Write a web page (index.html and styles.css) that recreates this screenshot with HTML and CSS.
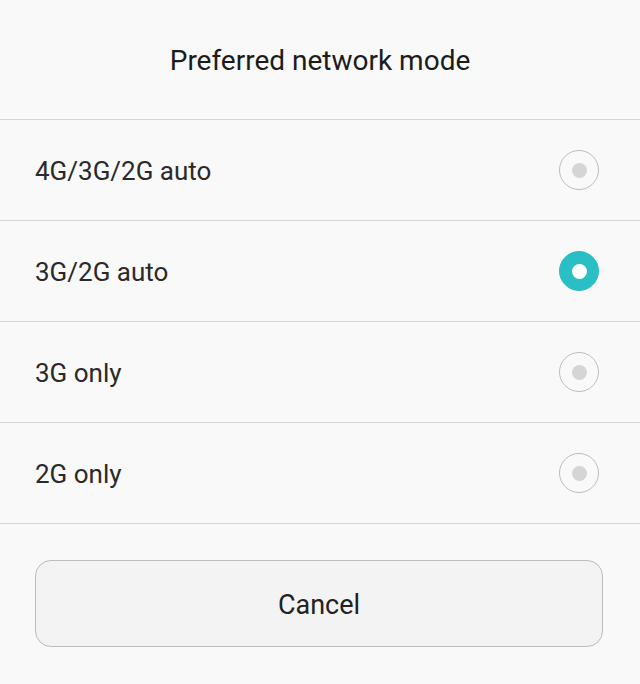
FILE: index.html
```html
<!DOCTYPE html>
<html lang="en">
<head>
    <meta charset="UTF-8" />
    <title>Preferred network mode</title>
    <link rel="stylesheet" href="styles.css">
</head>
<body>
    <div class="dialog">
        <h1 class="title">Preferred network mode</h1>

        <ul class="options">
            <li class="option">
                <span class="label">4G/3G/2G auto</span>
                <span class="radio"></span>
            </li>
            <li class="option">
                <span class="label">3G/2G auto</span>
                <span class="radio checked"></span>
            </li>
            <li class="option">
                <span class="label">3G only</span>
                <span class="radio"></span>
            </li>
            <li class="option">
                <span class="label">2G only</span>
                <span class="radio"></span>
            </li>
        </ul>

        <div class="actions">
            <button class="cancel">Cancel</button>
        </div>
    </div>
</body>
</html>
```

FILE: styles.css
```css
body {
    margin: 0;
    background: #f9f9f9;
    font-family: Roboto, 'Noto Sans', sans-serif;
    color: #212121;
}
.dialog {
    width: 640px;
    height: 684px;
}
.title {
    margin: 0;
    height: 119px;
    line-height: 122px;
    text-align: center;
    font-size: 28px;
    font-weight: normal;
    color: #1c1c1c;
    border-bottom: 1px solid #d6d6d6;
}
.options {
    list-style: none;
    margin: 0;
    padding: 0;
}
.option {
    display: flex;
    align-items: center;
    justify-content: space-between;
    height: 100px;
    padding: 0 41px 0 35px;
    border-bottom: 1px solid #d6d6d6;
}
.label {
    font-size: 26px;
    line-height: 1;
    padding-top: 2px;
    color: #2a2a2a;
}
.radio {
    position: relative;
    width: 38px;
    height: 38px;
    border: 1px solid #bdbdbd;
    border-radius: 50%;
    box-sizing: content-box;
}
.radio::after {
    content: '';
    position: absolute;
    top: 12px;
    left: 12px;
    width: 15px;
    height: 15px;
    border-radius: 50%;
    background: #d5d5d5;
}
.radio.checked {
    background: #29bfc4;
    border-color: #29bfc4;
}
.radio.checked::after {
    background: #fff;
}
.actions {
    padding: 36px 37px 0 35px;
}
.cancel {
    display: block;
    width: 100%;
    height: 87px;
    padding: 2px 0 0;
    border: 1px solid #bcbcbc;
    border-radius: 16px;
    background: #f3f3f3;
    font-family: inherit;
    font-size: 27px;
    color: #222;
}
```
